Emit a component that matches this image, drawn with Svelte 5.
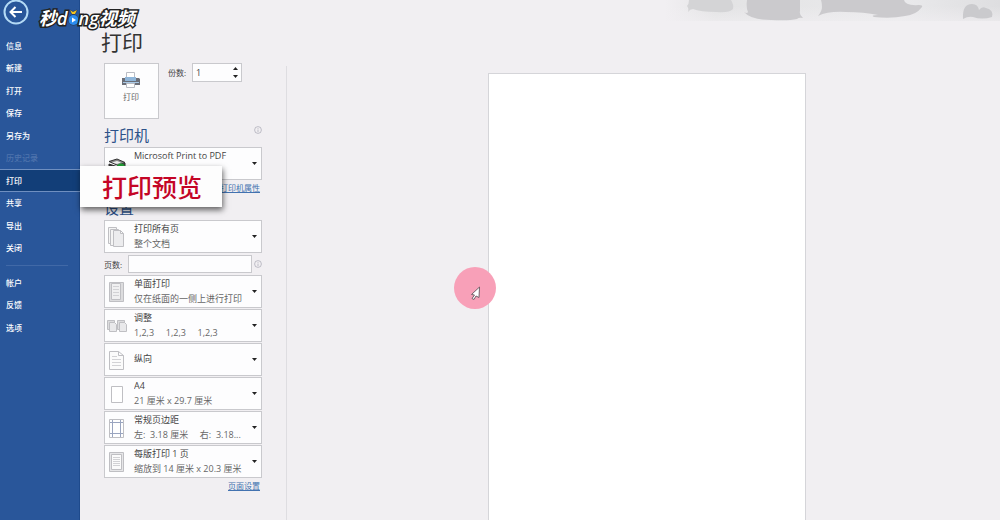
<script lang="ts">
    type Setting = { id: string; icon: string; title: string; detail?: string };

    const menu = ["信息", "新建", "打开", "保存", "另存为", "历史记录", "打印", "共享", "导出", "关闭"];
    const footer = ["帐户", "反馈", "选项"];

    const settings: Setting[] = [
        { id: "sides", icon: "single", title: "单面打印", detail: "仅在纸面的一侧上进行打印" },
        { id: "collate", icon: "collate", title: "调整", detail: "1,2,3     1,2,3     1,2,3" },
        { id: "orientation", icon: "portrait", title: "纵向" },
        { id: "paper", icon: "paper", title: "A4", detail: "21 厘米 x 29.7 厘米" },
        { id: "margins", icon: "margins", title: "常规页边距", detail: "左:  3.18 厘米     右:  3.18..." },
        { id: "scale", icon: "scale", title: "每版打印 1 页", detail: "缩放到 14 厘米 x 20.3 厘米" }
    ];

    let copies = $state(1);
    let pages = $state("");
</script>

{#snippet info()}
    <svg class="info" viewBox="0 0 8 8" aria-hidden="true">
        <circle cx="4" cy="4" r="3.4" />
        <path d="M4 3.500V6M4 2v.8" />
    </svg>
{/snippet}

{#snippet icon(name: string)}
    <svg class="icon" viewBox="0 0 20 24" aria-hidden="true">
        {#if name === "printer"}
            <path d="M2 9.500l8-2.500 8 3.500-7 3z" fill="#8a8a8a" stroke="#333" />
            <path d="M5 10.500l5-1.500 4 1.500-4 1.500z" fill="#eee" stroke="none" />
            <path d="M2 12v3l8 4 8-4v-4l-7 4z" fill="#3a3a3a" stroke="#333" />
            <circle cx="14" cy="16" r="4.500" fill="#21a336" stroke="none" />
        {:else if name === "all"}
            <path d="M1.500 2.500h8v16h-8z" fill="#f4f4f4" />
            <path d="M3.500 4.500h8v16h-8z" fill="#f4f4f4" />
            <path d="M6.500 5.500h7l3 3v13h-10zM13.500 5.500v3h3" fill="#ececee" />
        {:else if name === "single"}
            <path d="M2.500 2.500h14v19h-14z" fill="#dcdcde" />
            <path d="M4.500 3.500h9v16h-9z" fill="#f0f0f1" />
            <path class="text" d="M6 6.500h6M6 9.500h6M6 12.500h6M6 15.500h6" />
        {:else if name === "collate"}
            <path d="M.5 6.500h7v9h-7zM10.500 6.500h7v9h-7z" fill="#dcdcde" />
            <path d="M2.500 8.500h5l2 2v7h-7zM12.500 8.500h5l2 2v7h-7z" fill="#e9e9eb" />
        {:else if name === "portrait"}
            <path d="M2.500 3.500h9l5 4v14h-14zM11.500 3.500v4h5" fill="#fbfbfb" />
            <path class="text" d="M5 8.500h5M5 11.500h9M5 14.500h9M5 17.500h9" />
        {:else if name === "paper"}
            <path d="M4.500 4.500h11v16h-11z" fill="#fff" />
        {:else if name === "margins"}
            <path d="M2.500 3.500h14v18h-14z" fill="#fff" />
            <path d="M5.500 4v17M13.500 4v17M3 6.500h13M3 17.500h13" stroke="#9aa5c0" />
        {:else}
            <path d="M2.500 2.500h14v19h-14z" fill="#e6e6e8" />
            <path d="M4.500 4.500h10v15h-10z" fill="#fbfbfb" />
            <path class="text" d="M6 7.500h7M6 9.500h7M6 11.500h7M6 13.500h7M6 15.500h7" />
        {/if}
    </svg>
{/snippet}

{#snippet picker({ id, icon: name, title, detail }: Setting)}
    <label class="picker" for={id}>
        {@render icon(name)}
        <span class="lines">
            <select {id}>
                <option>{title}</option>
            </select>
            {#if detail}
                <span class="detail">{detail}</span>
            {/if}
        </span>
        <svg class="caret" viewBox="0 0 5 3" aria-hidden="true"><path d="M0 0h5L2.500 3z" /></svg>
    </label>
{/snippet}

<div class="backstage">
    <nav>
        <button class="back" aria-label="返回">
            <svg viewBox="0 0 26 26" aria-hidden="true">
                <circle cx="13" cy="13" r="11.500" />
                <path d="M19 13H8M12.500 8L7.500 13l5 5" />
            </svg>
        </button>
        <ul class="menu">
            {#each menu as item}
                <li class:active={item === "打印"} class:disabled={item === "历史记录"}>
                    <a href="#{item}">{item}</a>
                </li>
            {/each}
        </ul>
        <hr />
        <ul class="menu short">
            {#each footer as item}
                <li><a href="#{item}">{item}</a></li>
            {/each}
        </ul>
    </nav>

    <main>
        <section class="options">
            <h1>打印</h1>
            <div class="run">
                <button class="print">
                    <svg viewBox="0 0 20 18" aria-hidden="true">
                        <path d="M5.500 1.500h8v6h-8z" fill="#fff" stroke="#b9bcc4" />
                        <path d="M1 7h3v3h11V7h3l1 1v6H1z" fill="#6b6e78" />
                        <path d="M4 6h11v4H4z" fill="#8fb6da" />
                        <path d="M2 11h16v1H2z" fill="#a9c8e4" />
                        <path d="M5.500 12.500h8v4h-8z" fill="#fff" stroke="#b9bcc4" />
                    </svg>
                    <span>打印</span>
                </button>
                <label for="copies">份数:</label>
                <div class="spin">
                    <input id="copies" type="number" min="1" bind:value={copies} />
                    <div class="arrows">
                        <button aria-label="增加" onclick={() => copies++}>
                            <svg viewBox="0 0 5 3" aria-hidden="true"><path d="M0 3h5L2.500 0z" /></svg>
                        </button>
                        <button aria-label="减少" onclick={() => (copies = Math.max(1, copies - 1))}>
                            <svg viewBox="0 0 5 3" aria-hidden="true"><path d="M0 0h5L2.500 3z" /></svg>
                        </button>
                    </div>
                </div>
            </div>

            <h2>打印机 {@render info()}</h2>
            {@render picker({ id: "printer", icon: "printer", title: "Microsoft Print to PDF", detail: " " })}
            <a class="link" href="#printer-properties">打印机属性</a>

            <h2 class="second">设置</h2>
            {@render picker({ id: "range", icon: "all", title: "打印所有页", detail: "整个文档" })}
            <div class="pages">
                <label for="pages">页数:</label>
                <input id="pages" type="text" bind:value={pages} />
                {@render info()}
            </div>
            <div class="list">
                {#each settings as setting (setting.id)}
                    {@render picker(setting)}
                {/each}
            </div>
            <a class="link" href="#page-setup">页面设置</a>
        </section>

        <section class="preview" aria-label="打印预览">
            <div class="sheet"></div>
        </section>
    </main>

    <svg class="clouds" viewBox="0 0 335 21" aria-hidden="true">
        <defs>
            <linearGradient id="haze">
                <stop offset="0" stop-color="#e6e6e7" stop-opacity="0" />
                <stop offset="0.15" stop-color="#e3e3e4" />
                <stop offset="0.7" stop-color="#eaeaec" />
                <stop offset="1" stop-color="#dedee0" />
            </linearGradient>
            <linearGradient id="fade" x2="0" y2="1">
                <stop offset="0.3" stop-color="#f1eff2" stop-opacity="0" />
                <stop offset="1" stop-color="#f1eff2" stop-opacity="0.6" />
            </linearGradient>
        </defs>
        <path d="M0 0h335v21H0z" fill="url(#haze)" />
        <path d="M0 0h335v21H0z" fill="url(#fade)" />
        <path d="M24 0h42q3 5 2 9-4 4-16 3-17 0-24-3-3 0-5 3 1-4-1-6 2-2 2-6z" fill="#d4d4d6" />
        <path d="M82 0h53v11q-1 4 3 7-4-1-6 1-8 2-26 1-20 0-27-8 3 2 4 0-2-4-1-12z" fill="#cbcacd" />
        <path d="M156 0h83q1 6 15 5 4 0 3 2-6 8-17 9-14 3-31 1-4-2 4-2-14-3-32-3-18-1-28 4 4-5 4-9 0-4-1-7z" fill="#cbcacd" />
        <path d="M298 19q-1-15 9-15 6 0 7 6 3-4 7-2 8 2 6 9-10 3-19 0-5-1-10 2z" fill="#cacacd" />
    </svg>

    <div class="callout">打印预览</div>

    <div class="brand" aria-label="秒dong视频">
        <span class="cjk">秒</span><span>d</span><svg viewBox="0 0 11 18" aria-hidden="true">
            <path d="M2 1l3 2 4-2-2 4H4z" fill="#f6c51d" stroke="#222" stroke-width=".5" />
            <circle cx="5.500" cy="11" r="5" fill="#2b8df0" stroke="#222" stroke-width=".6" />
            <path d="M4 8.500l4 2.500-4 2.500z" fill="#fff" />
        </svg><span>ng</span><span class="cjk">视频</span>
    </div>

    <div class="pointer">
        <svg viewBox="0 0 12 16" aria-hidden="true">
            <path d="M9.500 1L1.500 8.500l3 .5-2.500 3.500 2 1 2-3.500 3 1.500z" fill="#fff" stroke="#75606a" />
        </svg>
    </div>
</div>

<style>
    :global(body) {
        margin: 0;
        background: #f1eff2;
    }

    .backstage {
        position: relative;
        display: grid;
        grid-template-columns: 80px 1fr;
        height: 100vh;
        min-height: 500px;
        overflow: hidden;
        color: #444;
        font: 9px/15px "Open Sans", "Noto Sans CJK SC", sans-serif;
    }

    button,
    input,
    select {
        margin: 0;
        padding: 0;
        border: 0;
        background: none;
        color: inherit;
        font: inherit;
    }

    nav {
        background: #29569a;
        box-shadow: inset -1px 0 #1e4a8c;
        color: #fff;
    }

    .back {
        display: block;
        height: 34px;
        padding: 0 3px;
    }

    .back svg {
        display: block;
        width: 26px;
        height: 26px;
        margin-top: -10px;
        fill: none;
        stroke: #fff;
        stroke-width: 2;
    }

    .back circle {
        stroke: #b4daf5;
    }

    .menu {
        display: grid;
        grid-auto-rows: 1fr;
        height: 225px;
        margin: 0;
        padding: 0;
        list-style: none;
        font-size: 8px;
        font-weight: 500;
    }

    .menu.short {
        height: 68px;
    }

    .menu a {
        display: flex;
        align-items: center;
        box-sizing: border-box;
        height: 100%;
        padding-left: 6px;
        color: inherit;
        text-decoration: none;
    }

    .menu .active {
        border: solid #6f8fc0;
        border-width: 1px 0;
        background: #123e78;
    }

    .menu .disabled {
        color: #4f74ad;
    }

    hr {
        height: 1px;
        margin: 6px 12px 5px 6px;
        border: 0;
        background: #4169a7;
    }

    main {
        display: grid;
        grid-template-columns: 206px 1fr;
    }

    .options {
        box-sizing: border-box;
        padding: 27px 24px 0;
    }

    h1,
    h2 {
        margin: 0;
        font-weight: 400;
    }

    h1 {
        margin-left: -3px;
        color: #333;
        font-size: 21px;
        line-height: 30px;
    }

    h2 {
        display: flex;
        justify-content: space-between;
        margin: 7px 0 2px;
        color: #2d5289;
        font-size: 15px;
        line-height: 19px;
    }

    h2.second {
        margin-top: 4px;
    }

    .run {
        display: flex;
        align-items: flex-start;
        margin-top: 6px;
    }

    .run label {
        margin: 2px 6px 0 9px;
        font-size: 8px;
    }

    .print {
        display: flex;
        flex-direction: column;
        align-items: center;
        box-sizing: border-box;
        width: 55px;
        height: 56px;
        padding: 7px 1px 0 0;
        border: 1px solid #c9c9cd;
        background: #fdfdfe;
        color: #666;
        font-size: 8px;
    }

    .print svg {
        width: 20px;
        height: 18px;
    }

    .spin {
        display: flex;
        box-sizing: border-box;
        width: 50px;
        height: 19px;
        border: 1px solid #c9c9cd;
        background: #fdfdfe;
    }

    .spin input {
        flex: 1;
        min-width: 0;
        padding-left: 3px;
        appearance: textfield;
    }

    .spin input::-webkit-inner-spin-button {
        display: none;
    }

    .arrows {
        display: grid;
        width: 11px;
    }

    .arrows button {
        display: grid;
        place-items: center;
    }

    .arrows svg,
    .caret {
        width: 5px;
        height: 3px;
        fill: #222;
    }

    .info {
        width: 8px;
        height: 8px;
        fill: none;
        stroke: #9a9aa8;
        stroke-width: 0.6;
    }

    .picker {
        display: flex;
        align-items: center;
        box-sizing: border-box;
        height: 33px;
        padding: 0 4px 0 2px;
        border: 1px solid #c9c9cd;
        background: #fdfdfe;
    }

    .icon {
        flex: none;
        width: 20px;
        height: 24px;
        fill: none;
        stroke: #bfbfc3;
    }

    .icon .text {
        stroke: #d2d2d5;
    }

    .lines {
        display: grid;
        flex: 1;
        min-width: 0;
        padding: 0 0 2px 7px;
    }

    .picker select {
        width: 100%;
        height: 15px;
        appearance: none;
    }

    .detail {
        min-height: 15px;
        margin-right: -8px;
        color: #666;
        white-space: pre;
    }

    .link {
        display: block;
        margin: 0 2px 0 0;
        color: #4272b0;
        font-size: 8px;
        text-align: right;
    }

    .pages {
        display: flex;
        align-items: center;
        justify-content: space-between;
        margin: 2px 0;
        font-size: 8px;
    }

    .pages input {
        box-sizing: border-box;
        width: 124px;
        height: 18px;
        margin-left: auto;
        margin-right: 2px;
        border: 1px solid #c9c9cd;
        background: #fdfdfe;
    }

    .list {
        display: grid;
        gap: 1px;
    }

    .preview {
        display: flex;
        justify-content: center;
        margin-top: 66px;
        padding: 7px 0 0 7px;
        border-left: 1px solid #dedde1;
    }

    .sheet {
        box-sizing: border-box;
        width: 45%;
        border: solid #d5d5d9;
        border-width: 1px 1px 0;
        background: #fff;
    }

    .clouds {
        position: absolute;
        top: 0;
        right: 0;
        width: 335px;
        height: 21px;
    }

    .callout {
        position: absolute;
        top: 166px;
        left: 80px;
        padding: 1px 20px 0 22px;
        background: #fdfdfd;
        box-shadow: 1px 3px 6px #0009;
        color: #c40526;
        font-size: 25px;
        font-weight: 500;
        line-height: 40px;
    }

    .brand {
        position: absolute;
        top: 7px;
        left: 39px;
        display: flex;
        align-items: center;
        color: #fff;
        font: italic 600 18px/22px "Open Sans", "Noto Sans CJK SC", sans-serif;
        -webkit-text-stroke: 3px #222;
        paint-order: stroke fill;
    }

    .brand svg {
        width: 11px;
        height: 18px;
    }

    .pointer {
        position: absolute;
        top: 267px;
        left: 454px;
        display: grid;
        place-items: center;
        box-sizing: border-box;
        width: 42px;
        height: 42px;
        padding: 12px 0 0 2px;
        border-radius: 50%;
        background: #f8a0b8;
    }

    .pointer svg {
        width: 12px;
        height: 16px;
    }
</style>
